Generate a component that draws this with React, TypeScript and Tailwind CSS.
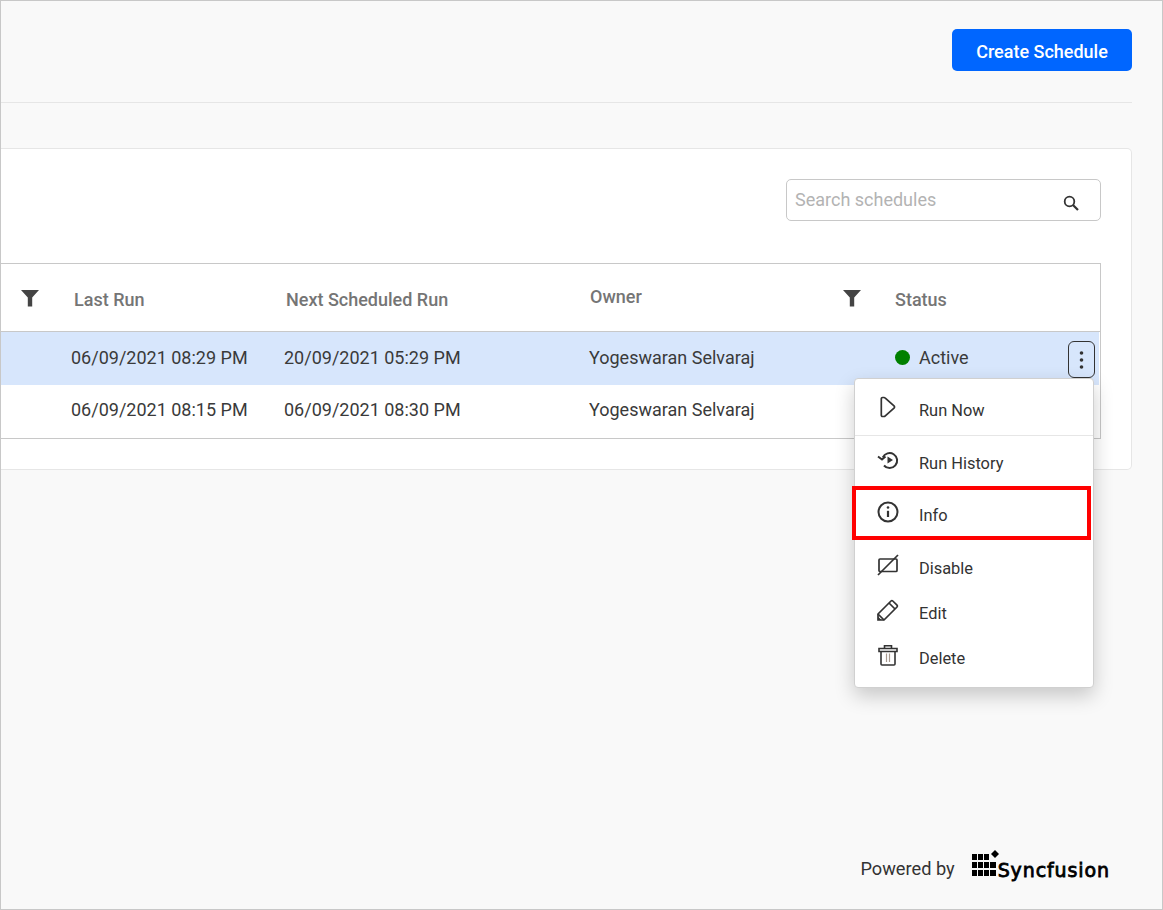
import React from "react";

const Funnel = () => (
  <svg width="18" height="17" viewBox="0 0 18 17" className="block">
    <path d="M0 0H18L11.200 7.600V16.500H6.800V7.600Z" fill="#444" />
  </svg>
);

const icons: Record<string, React.ReactNode> = {
  run: (
    <svg width="18" height="22" viewBox="0 0 18 22" fill="none" stroke="#333" strokeWidth="1.700">
      <path d="M3.500 1.500H5C5.500 1.500 5.900 1.700 6.300 2.100L15 9.800C15.700 10.500 15.700 11.500 15 12.200L6.300 19.900C5.900 20.300 5.500 20.500 5 20.500H3.500C2.800 20.500 2.300 20 2.300 19.300V2.700C2.300 2 2.800 1.500 3.500 1.500Z" />
    </svg>
  ),
  history: (
    <svg width="22" height="20" viewBox="0 0 22 20" fill="none" stroke="#333" strokeWidth="2">
      <path d="M5.800 7.500A7.500 7.500 0 1 1 7 15.500" />
      <path d="M1 6.500L5 9.500L8.500 6.500" />
      <path d="M10.500 6.500L16 10L10.500 13.500Z" fill="#333" stroke="none" />
    </svg>
  ),
  info: (
    <svg width="22" height="22" viewBox="0 0 22 22" fill="none" stroke="#333" strokeWidth="2">
      <circle cx="11" cy="11" r="9.500" />
      <path d="M11 9.800V16" strokeWidth="2.200" />
      <circle cx="11" cy="6.500" r="1.300" fill="#333" stroke="none" />
    </svg>
  ),
  disable: (
    <svg width="22" height="22" viewBox="0 0 22 22" fill="none" stroke="#333" strokeWidth="1.700">
      <rect x="2" y="5" width="18" height="12.500" rx="1" />
      <path d="M1 21L21 1" />
    </svg>
  ),
  edit: (
    <svg width="22" height="22" viewBox="0 0 22 22" fill="none" stroke="#333" strokeWidth="1.700">
      <path d="M1 15L14 2C14.500 1.500 15.300 1.500 15.800 2L20 6.200C20.500 6.700 20.500 7.500 20 8L7 21H1Z" />
      <path d="M1 15L7 21M12 4L18 10" />
      <path d="M1 21V17.500L4.500 21Z" fill="#333" stroke="none" />
    </svg>
  ),
  del: (
    <svg width="20" height="22" viewBox="0 0 20 22" fill="none" stroke="#333" strokeWidth="1.600">
      <path d="M1 4.500H19V7.500H1Z" />
      <path d="M3 7.500V20C3 20.600 3.400 21 4 21H16C16.600 21 17 20.600 17 20V7.500" />
      <path d="M6.500 4.500V1.800H13.500V4.500" />
      <path d="M8.500 9.500V18M11.500 9.500V18" stroke="#a89a90" strokeWidth="1.200" />
    </svg>
  ),
};

const Cell = ({ w, className = "", children }: { w: string; className?: string; children?: React.ReactNode }) => (
  <div className={`${w} shrink-0 ${className}`}>{children}</div>
);

const Row = ({ last, next, blue }: { last: string; next: string; blue?: boolean }) => (
  <div className={`mr-[1px] flex h-[53px] items-center text-[18px] text-[#3a3a3a] ${blue ? "bg-[#d7e6fc] pb-[2px]" : "bg-white pb-[4px]"}`}>
    <Cell w="w-[70px]" />
    <Cell w="w-[213px]">{last}</Cell>
    <Cell w="w-[305px]">{next}</Cell>
    <Cell w="w-[306px]">Yogeswaran Selvaraj</Cell>
    {blue && (
      <div className="flex items-center gap-[9px]">
        <span className="h-[15px] w-[15px] rounded-full bg-[#008000]" />
        <span>Active</span>
      </div>
    )}
  </div>
);

const MenuItem = ({ icon, label, h, textClass }: { icon: string; label: string; h: string; textClass: string }) => (
  <div className={`flex ${h} items-center text-[16.400px] text-[#333]`}>
    <div className="mb-[6px] flex w-[64px] shrink-0 justify-center pl-[2px]">{icons[icon]}</div>
    <span className={textClass}>{label}</span>
  </div>
);

export default function App() {
  return (
    <div
      className="relative flex h-[910px] w-[1163px] flex-col overflow-hidden border border-[#c8c8c8] bg-[#f9f9f9]"
      style={{ fontFamily: "Roboto, sans-serif" }}
    >
      <div className="mr-[30px] flex h-[102px] justify-end border-b border-[#e6e6e6] pt-[28px]">
        <button className="h-[42px] w-[180px] rounded-[5px] bg-[#0066ff] pt-[2px] text-[18px] font-medium text-white">
          Create Schedule
        </button>
      </div>

      <div className="mr-[30px] mt-[45px] h-[322px] rounded-r-[5px] border border-l-0 border-[#e6e6e6] bg-white">
        <div className="flex h-[114px] justify-end pr-[30px] pt-[30px]">
          <div className="flex h-[42px] w-[315px] items-center justify-between rounded-[5px] border border-[#c8c8c8] pl-[8px] pr-[21px]">
            <span className="-mt-[2px] text-[18px] text-[#b3b3b3]">Search schedules</span>
            <svg width="16" height="16" viewBox="0 0 16 16" fill="none" stroke="#333" strokeWidth="1.800" className="mt-[6px]">
              <circle cx="6.500" cy="6.500" r="4.800" />
              <path d="M10 10L15 15" strokeWidth="2.200" />
            </svg>
          </div>
        </div>
        <div className="mr-[30px] border-y border-r border-[#c8c8c8]">
          <div className="flex h-[68px] items-center border-b border-[#c8c8c8] text-[18px] font-medium text-[#757575]">
            <Cell w="w-[73px]" className="mt-[2px] pl-[20px]"><Funnel /></Cell>
            <Cell w="w-[212px]" className="mt-[3px]">Last Run</Cell>
            <Cell w="w-[304px]" className="mt-[3px]">Next Scheduled Run</Cell>
            <Cell w="w-[253px]" className="-mt-[3px]">Owner</Cell>
            <Cell w="w-[52px]" className="mt-[2px]"><Funnel /></Cell>
            <Cell w="w-[100px]" className="mt-[3px]">Status</Cell>
          </div>
          <Row blue last="06/09/2021 08:29 PM" next="20/09/2021 05:29 PM" />
          <Row last="06/09/2021 08:15 PM" next="06/09/2021 08:30 PM" />
        </div>
      </div>

      <div className="mt-auto flex items-center justify-end pb-[24px] pr-[52px]">
        <span className="mr-[17px] mt-[4px] text-[18.200px] text-[#333]">Powered by</span>
        <svg width="29" height="30" viewBox="0 0 29 30" fill="#000" className="mb-[6px]">
          <path d="M0 5H5V11H0ZM6 5H11V11H6ZM12 5H17V11H12ZM0 13H5V19H0ZM6 13H11V19H6ZM12 13H17V19H12ZM18 13H24V19H18ZM0 21H5V27H0ZM6 21H11V27H6ZM12 21H17V27H12ZM18 21H24V27H18ZM23 1L27 5L23 9L19 5Z" />
        </svg>
        <span
          className="-ml-[3px] mt-[6px] text-[19px] leading-none tracking-[0.900px] text-black [-webkit-text-stroke:0.8px_#000]"
          style={{ fontFamily: "'DejaVu Sans', sans-serif" }}
        >
          Syncfusion
        </span>
      </div>

      <button className="absolute left-[1067px] top-[340px] flex h-[37px] w-[27px] items-center justify-center rounded-[6px] border border-[#333]">
        <svg width="5" height="20" viewBox="0 0 5 20" fill="#333">
          <circle cx="2.500" cy="3" r="1.800" />
          <circle cx="2.500" cy="10" r="1.800" />
          <circle cx="2.500" cy="17" r="1.800" />
        </svg>
      </button>

      <div className="absolute left-[853px] top-[377px] h-[310px] w-[240px] rounded-[4px] border border-[#d0d0d0] bg-white shadow-[0_8px_20px_rgba(0,0,0,0.2)]">
        <div className="border-b border-[#e6e6e6] pt-[6px]"><MenuItem icon="run" label="Run Now" h="h-[50px]" textClass="pt-[2px]" /></div>
        <MenuItem icon="history" label="Run History" h="h-[53px]" textClass="pt-[4px]" />
        <MenuItem icon="info" label="Info" h="h-[52px]" textClass="pt-[2px]" />
        <div className="pt-[5px]"><MenuItem icon="disable" label="Disable" h="h-[44px]" textClass="pt-[2px]" /></div>
        <MenuItem icon="edit" label="Edit" h="h-[45px]" textClass="pt-[4px]" />
        <MenuItem icon="del" label="Delete" h="h-[45px]" textClass="pt-[4px]" />
      </div>

      <div className="absolute left-[851px] top-[485px] h-[54px] w-[239px] border-[4px] border-[#ff0000]" />
    </div>
  );
}
